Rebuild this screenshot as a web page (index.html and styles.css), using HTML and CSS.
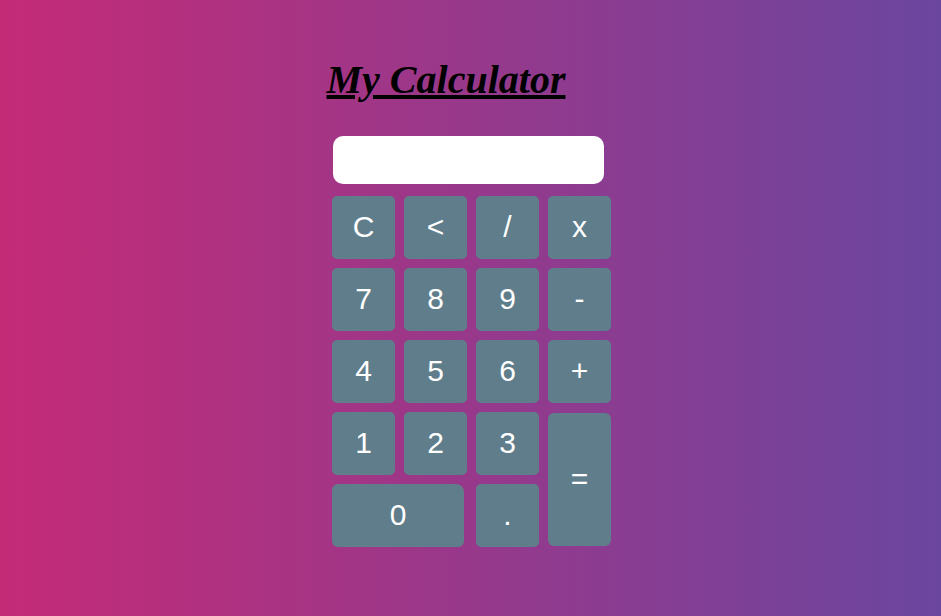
FILE: index.html
```html
<!DOCTYPE html>
<html>
<head>
<meta charset="utf-8">
<link rel="stylesheet" href="styles.css">
</head>
<body>
<div class="page">
  <h1 class="title">My Calculator</h1>
  <div class="calc">
    <div class="display"></div>
    <div class="keys">
      <button class="key">C</button>
      <button class="key">&lt;</button>
      <button class="key">/</button>
      <button class="key">x</button>
      <button class="key">7</button>
      <button class="key">8</button>
      <button class="key">9</button>
      <button class="key">-</button>
      <button class="key">4</button>
      <button class="key">5</button>
      <button class="key">6</button>
      <button class="key">+</button>
      <button class="key">1</button>
      <button class="key">2</button>
      <button class="key">3</button>
      <button class="key equals">=</button>
      <button class="key zero">0</button>
      <button class="key">.</button>
    </div>
  </div>
</div>
</body>
</html>
```
FILE: styles.css
```css
html, body {
  margin: 0;
  height: 100%;
}
body {
  background: linear-gradient(to right, #c42b77, #6b469f);
  font-family: "Liberation Serif", serif;
}
.page {
  display: flex;
  flex-direction: column;
  align-items: center;
  padding-top: 57px;
}
.title {
  margin: 0 49px 0 0;
  font-size: 40px;
  font-style: italic;
  font-weight: bold;
  text-decoration: underline;
  color: #000;
  line-height: 46px;
}
.calc {
  margin-top: 33px;
  margin-left: 2px;
  width: 279px;
  display: flex;
  flex-direction: column;
}
.display {
  width: 271px;
  height: 48px;
  margin-left: 1px;
  background: #fff;
  border-radius: 10px;
}
.keys {
  margin-top: 12px;
  display: grid;
  grid-template-columns: repeat(4, 63px);
  grid-template-rows: repeat(5, 63px);
  gap: 9px;
}
.key {
  border: none;
  border-radius: 5px;
  background: #607d8b;
  color: #fff;
  font-family: "Liberation Sans", Arial, sans-serif;
  font-size: 30px;
  padding: 0 0 1px;
}
.equals {
  grid-column: 4;
  grid-row: 4 / span 2;
  margin-top: 1px;
  margin-bottom: 1px;
  border-radius: 6px;
}
.zero {
  grid-column: 1 / span 2;
  width: 132px;
  border-radius: 6px 8px 6px 6px;
}
```
